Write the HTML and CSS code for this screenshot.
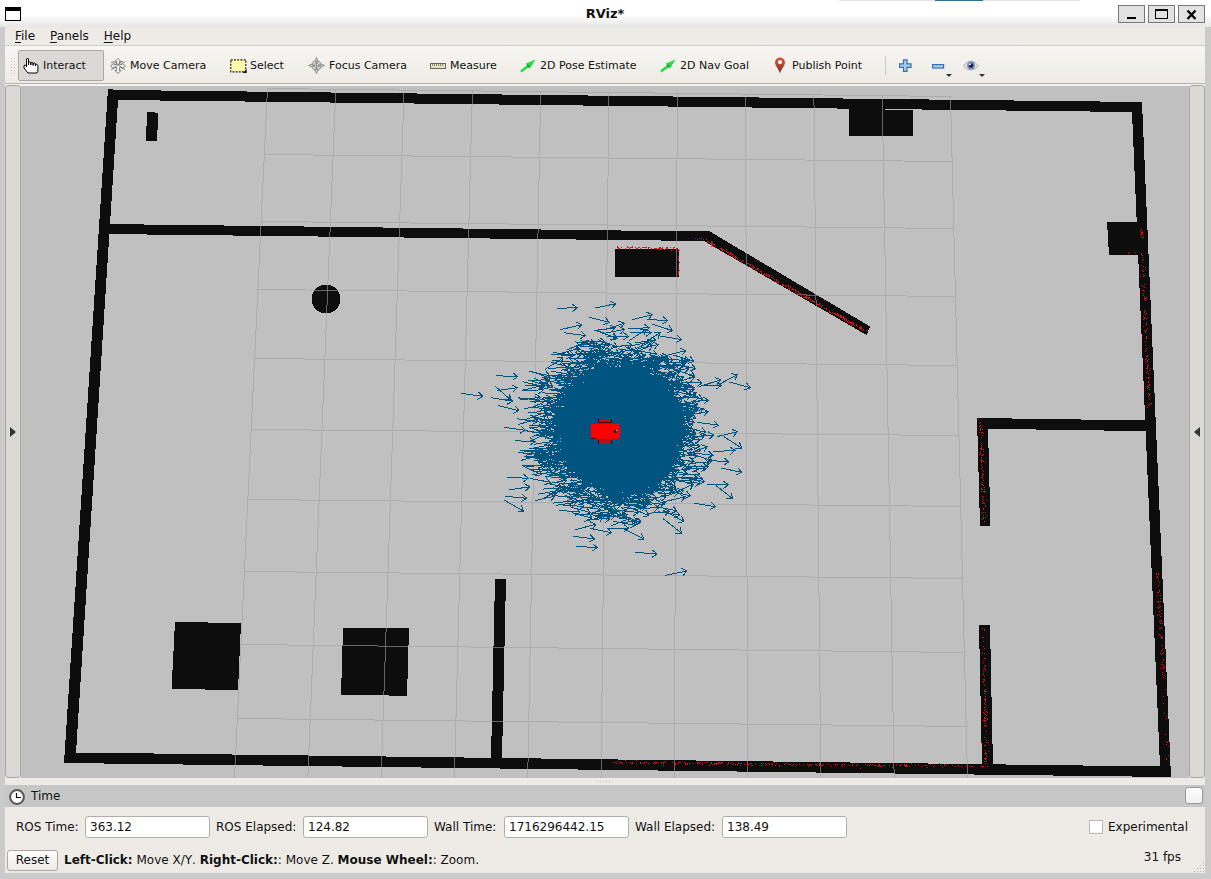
FILE: index.html
```html
<!DOCTYPE html>
<html lang="en">
<head>
<meta charset="utf-8">
<title>RViz*</title>
<link rel="stylesheet" href="styles.css">
</head>
<body>
<div class="window">
  <header class="titlebar">
    <svg class="app-icon" width="16" height="14" shape-rendering="crispEdges"><rect x=".5" y=".5" width="15" height="13" fill="#fff" stroke="#000"/><rect width="16" height="4"/></svg>
    <h1 class="title">RViz*</h1>
    <div class="win-buttons">
      <span class="win-btn"><svg width="26" height="17"><path d="M8 11h9v2H8z"/></svg></span>
      <span class="win-btn"><svg width="26" height="17" shape-rendering="crispEdges"><path d="M6 3h13v10H6zM7 5v7h11V5z" fill-rule="evenodd"/></svg></span>
      <span class="win-btn"><svg width="26" height="17"><path d="M8.500 4.500l8 8.500M16.500 4.500l-8 8.500" stroke="#000" stroke-width="2.300"/></svg></span>
    </div>
  </header>
  <div class="content">
    <nav class="menubar"><span><u>F</u>ile</span><span><u>P</u>anels</span><span><u>H</u>elp</span></nav>
    <div class="toolbar">
      <i class="grip"></i>
      <div class="tool interact active"><svg width="16" height="17" viewBox="0 0 16 17"><path d="M3.500 10V2q1-2 2 0v6V5.500q1-1 2.300 0V8 6q1-1 2.300 0v2.500V6.500q1-1 2.300 0V9 7.500q1.500-.8 2.500.8v6l-1 1.700H5L1 11V8.500q1.200-1 2.500.5z" fill="#fff" stroke="#000"/></svg>Interact</div>
      <div class="tool move"><svg width="16" height="16" viewBox="0 0 16 16" fill="#eee" stroke="#777" stroke-width=".9"><path d="M8 .5l3 3H9.500V6.500H12V5l3.500 3-3.500 3V9.500H9.500v3H11l-3 3-3-3h1.500v-3H4V11L.5 8 4 5v1.500h2.500v-3H5z"/><path d="M1 4.500l3-1 9 7 2 1M15 4.500l-3-1-9 7-2 1" fill="none"/></svg>Move Camera</div>
      <div class="tool select"><svg width="17" height="14"><rect x=".8" y=".8" width="15" height="12" fill="#fff9a9" stroke="#222" stroke-width="1.200" stroke-dasharray="2 1.200"/><path d="M16.500 10v4H13z"/></svg>Select</div>
      <div class="tool focus"><svg width="17" height="17" viewBox="0 0 17 17" fill="#e4e2de" stroke="#8a8a8a"><circle cx="8.500" cy="8.500" r="4.800"/><path d="M8.500.5l1.700 4.500H6.800zM8.500 16.500L6.800 12h3.400zM.5 8.500L5 6.800v3.400zM16.500 8.500L12 10.200V6.800z"/><path d="M8.500 4v9M4 8.500h9" stroke-width=".8"/><circle cx="8.500" cy="8.500" r="2.300" fill="none" stroke-width=".8"/></svg>Focus Camera</div>
      <div class="tool measure"><svg width="16" height="6"><rect x=".5" y=".5" width="15" height="5" fill="#eee2b7" stroke="#666"/><path d="M2.500 1v2M4.500 1v2M6.500 1v2M8.500 1v2M10.500 1v2M12.500 1v2" stroke="#888"/></svg>Measure</div>
      <div class="tool pose"><svg width="17" height="14"><path d="M1 12.500L8 7" stroke="#20da45" stroke-width="2.400"/><path d="M15.500 .5L5.500 4.700l2 1.300.5 3 2.200.3z" fill="#22dd48"/><path d="M6.500 5l3 2-1.500 1z" fill="#14752a"/></svg>2D Pose Estimate</div>
      <div class="tool nav"><svg width="17" height="14"><path d="M1 12.500L8 7" stroke="#20da45" stroke-width="2.400"/><path d="M15.500 .5L5.500 4.700l2 1.300.5 3 2.200.3z" fill="#22dd48"/><path d="M6.500 5l3 2-1.500 1z" fill="#14752a"/></svg>2D Nav Goal</div>
      <div class="tool publish"><svg width="12" height="17"><defs><linearGradient id="pin" x2="0" y2="1"><stop stop-color="#d4593d"/><stop offset=".5" stop-color="#a9452e"/><stop offset="1" stop-color="#5b3524"/></linearGradient></defs><path d="M6 16.500C5 12 1 9 1 5.500a5 5 0 0 1 10 0C11 9 7 12 6 16.500z" fill="url(#pin)"/><circle cx="6" cy="5.200" r="2.100" fill="#fbe9e4"/></svg>Publish Point</div>
      <i class="sep"></i>
      <svg class="act plus" width="13" height="13"><path d="M4.500.8h3.500v4h4v3.500H8v4H4.500v-4h-4V4.800h4z" fill="#a7d0ee" stroke="#3a6ea8" stroke-width="1.200"/></svg>
      <svg class="act minus" width="20" height="13"><rect x=".6" y=".6" width="11" height="3.400" fill="#a7d0ee" stroke="#3a6ea8" stroke-width="1.200"/><path d="M14 10h6l-3 3z" fill="#333"/></svg>
      <svg class="act eye" width="22" height="18"><path d="M.5 7Q8-3 15.500 7 8 15 .5 7z" fill="#e8e8ed" stroke="#aaaab3"/><circle cx="8" cy="6.500" r="4" fill="#7b8cbd"/><circle cx="8" cy="6.500" r="2.200" fill="#151a50"/><circle cx="7" cy="5.300" r="1" fill="#fff"/><path d="M16 15h6l-3 3z" fill="#333"/></svg>
    </div>
    <main class="view">
      <div class="side"><svg width="6" height="10"><path d="M0 0l6 5-6 5z" fill="#333"/></svg></div>
      <svg class="scene" viewBox="21 86 1168 692" width="1168" height="692" shape-rendering="crispEdges">
        <g fill="#0d0d0d">
          <path d="M108 89L118 90 1142 102 1171 777 64 763zM118 100L76 752.500 1160 766.500 1132 112z" fill-rule="evenodd"/>
          <path d="M104 224L700 231.500 709 231 870 326.500 866.500 335 704 241 104 234z"/>
          <path d="M147 112l11 .7-.8 28.300H146z"/>
          <path d="M615 249h63.500v28H614.500zM849 100h36v9.500h28V136h-64z"/>
          <path d="M1107 222h35l3 33.500-36-.8z"/>
          <path d="M977 418L1150 420.500V431.200L988 428.800 990.500 525.500H980z"/>
          <path d="M979 625h11l3 142-11-1z"/>
          <path d="M495 579h11l-4 180-11-.5z"/>
          <path d="M175 622l66 1-3 67-66.500-1zM343 628h66l-2 67.700-66-.7z"/>
          <circle cx="326" cy="299" r="14.500"/>
        </g>
        <path id="grid" class="grid"/>
        <path id="scan" fill="#e0141c"/>
        <path d="M695 238h1v1h-1zM697 239h1v1h-1zM699 238h1v1h-1zM701 238h1v1h-1zM703 239h1v1h-1z" fill="#8b1ca6"/>
        <path id="particles" class="particles"/>
        <g>
          <path d="M598 419h14v5h-14zM598 439h14v5h-14z" fill="#b3131d"/>
          <path d="M598 419h1v4h-1zM611 419h1v4h-1zM599 422h12v1h-12zM598 440h1v4h-1zM611 440h1v4h-1z" fill="#3b0712"/>
          <path d="M591 424h28l2 7-2 8H591z" fill="#f00"/>
          <path d="M591 438h5v1h-5z" fill="#3b0712"/>
          <path d="M614 430h3v3h-3z" fill="#222"/><path d="M616 430h1v1h-1z" fill="#ff9"/>
        </g>
      </svg>
      <div class="side"><svg width="6" height="10"><path d="M6 0L0 5l6 5z" fill="#333"/></svg></div>
    </main>
    <div class="splitter"><i></i></div>
    <div class="time-head">
      <svg width="16" height="16"><circle cx="8" cy="8" r="6.900" fill="#fff" stroke="#555" stroke-width="2"/><path d="M7.500 4v4.500H12" fill="none" stroke="#111" stroke-width="1.200"/></svg>
      <span>Time</span><i class="close"></i>
    </div>
    <div class="fields">
      <label class="l1">ROS Time:</label><span class="input">363.12</span>
      <label class="l2">ROS Elapsed:</label><span class="input">124.82</span>
      <label class="l3">Wall Time:</label><span class="input">1716296442.15</span>
      <label class="l4">Wall Elapsed:</label><span class="input">138.49</span>
      <span class="experimental"><i></i>Experimental</span>
    </div>
    <footer class="status">
      <span class="reset">Reset</span>
      <p><b>Left-Click:</b> Move X/Y. <b>Right-Click:</b>: Move Z. <b>Mouse Wheel:</b>: Zoom.</p>
      <span class="fps">31 fps</span>
      <svg class="sizegrip" width="12" height="12" fill="#b5b3ae"><path d="M10 0h1v1h-1zM7 3h1v1H7zM10 3h1v1h-1zM4 6h1v1H4zM7 6h1v1H7zM10 6h1v1h-1zM1 9h1v1H1zM4 9h1v1H4zM7 9h1v1H7zM10 9h1v1h-1z"/></svg>
    </footer>
  </div>
</div>
<script src="scene.js"></script>
</body>
</html>
```
FILE: styles.css
```css
* { box-sizing: border-box; }
body { margin: 0; font: 12px "DejaVu Sans", sans-serif; color: #111; overflow: hidden; }
svg { display: block; flex: none; }
.window { width: 1211px; height: 879px; background: #cbcbcb; display: flex; flex-direction: column; }
.titlebar { height: 27px; flex: none; display: flex; align-items: center; padding: 0 6px 0 5px;
  background: linear-gradient(90deg, transparent 839px, #e4e4e4 839px 935px, #2e6e93 935px 983px, #e4e4e4 983px 1080px, transparent 1080px) 0 0 / 100% 1px no-repeat,
  linear-gradient(#fff 55%, #e6e6e6); }
.app-icon { margin-top: 1px; }
.title { flex: 1; margin: 0 0 0 71px; font-size: 13px; text-align: center; font-weight: bold; color: #111; }
.win-buttons { display: flex; gap: 3px; margin-top: 1px; }
.win-btn { width: 27px; height: 18px; background: #e2e2e2; border: 1px solid #777; }
.content { flex: none; width: 1200px; height: 846px; margin-left: 5px; background: #eeebe7; display: flex; flex-direction: column; }
.menubar { height: 19px; flex: none; border-bottom: 1px solid #cfccc8; display: flex; gap: 15px; padding: 2px 10px 0; line-height: 14px; }
.menubar u { text-underline-offset: 2px; }
.toolbar { height: 38px; flex: none; padding-top: 2px; background: linear-gradient(#f8f6f2, #eeebe6); border-bottom: 1px solid #b4b2ae; display: flex; align-items: center; font-size: 11px; color: #111; }
.grip { width: 5px; height: 17px; margin: 0 3px 0 5px; background: radial-gradient(circle, #c4c1bb 0.7px, transparent 0.8px) 0 0 / 3px 3px; }
.tool { display: flex; align-items: center; gap: 4px; height: 31px; padding-left: 5px; white-space: nowrap; flex: none; }
.active { background: #dbd9d5; border: 1px solid #aaa8a4; border-radius: 2px; padding-left: 4px; }
.interact { width: 86px; margin-right: 1px; }
.move { width: 120px; }
.select { width: 78px; gap: 3px; }
.focus { width: 122px; }
.measure { width: 90px; }
.pose { width: 140px; gap: 3px; }
.nav { width: 114px; gap: 3px; }
.publish { width: 115px; gap: 6px; }
.sep { width: 1px; height: 19px; background: #cecbc6; margin-left: 1px; }
.plus { margin-left: 13px; }
.minus { margin: 10px 0 0 20px; }
.eye { margin: 5px 0 0 11px; }
.view { height: 694px; flex: none; display: flex; padding-top: 2px; background: #f4f2ef; }
.side { width: 16px; height: 693px; margin-top: -1px; background: #dad9d5; border: 1px solid #aaa8a3; border-radius: 3px; display: flex; align-items: center; justify-content: center; }
.scene { background: #c0c0c0; }
.grid { fill: none; stroke: rgba(160, 160, 164, .6); }
.particles { fill: none; stroke: #005580; }
.splitter { height: 7px; flex: none; display: flex; justify-content: center; align-items: center; }
.splitter i { width: 17px; height: 2px; background: repeating-linear-gradient(90deg, #c4c1bb 0 1px, transparent 1px 3px); background-size: 100% 1px; background-repeat: no-repeat; }
.time-head { height: 22px; flex: none; background: #c7c7c7; display: flex; align-items: center; padding: 0 2px 0 4px; gap: 6px; }
.time-head svg { margin-top: 2px; }
.close { width: 18px; height: 17px; border: 1px solid #999; border-radius: 3px; background: linear-gradient(#fff, #f0f0f0); margin: -1px 0 0 auto; }
.fields { height: 39px; flex: none; display: flex; align-items: center; padding-left: 11px; }
.input { width: 125px; height: 22px; background: #fff; border: 1px solid #b0aeaa; border-radius: 3px; padding: 0 4px; line-height: 20px; }
.l1 { width: 69px; }
.l2, .l3, .l4 { padding-left: 6px; }
.l2 { width: 93px; }
.l3 { width: 76px; }
.l4 { width: 93px; }
.experimental { margin-left: auto; display: flex; align-items: center; gap: 5px; padding-right: 17px; }
.experimental i { width: 14px; height: 14px; border: 1px solid #bbb8b2; background: #fff; }
.status { height: 28px; flex: none; display: flex; align-items: center; padding: 0 0 1px 2px; position: relative; }
.reset { width: 51px; height: 21px; border: 1px solid #aaa8a3; border-radius: 3px; background: linear-gradient(#fff, #edebe8); text-align: center; line-height: 19px; margin-top: 1px; }
.status p { margin: 0 0 0 6px; white-space: nowrap; font-kerning: none; }
.fps { margin: -6px 24px 0 auto; }
.sizegrip { position: absolute; right: 0; bottom: 0; }
```
FILE: scene.js
```js
let seed = 7;
const rnd = () => (seed = (seed * 16807) % 2147483647) / 2147483647;
const gauss = () => Math.sqrt(-2 * Math.log(rnd())) * Math.cos(2 * Math.PI * rnd());

// Ground grid in perspective: ten columns, nine visible rows.
let g = '';
for (let i = 0; i <= 10; i++) g += `M${267.5 + 68.3 * i} ${88 + 0.8 * i}L${234.5 + 73.3 * i} 779`;
const rows = [[268, 88], [264, 154], [261, 221], [257, 289], [254, 358], [251, 429], [248, 499], [245, 571], [241, 644], [237, 718]];
const ends = [[951, 96], [952, 161], [953.5, 228], [955.5, 296], [957, 365], [959, 435], [961, 506], [963, 578], [966, 652], [968, 726]];
rows.forEach((r, i) => { g += `M${r[0]} ${r[1] + 0.5}L${ends[i][0]} ${ends[i][1] + 0.5}`; });
document.getElementById('grid').setAttribute('d', g);

// Laser returns: x1, y1, x2, y2, count, spread.
const hits = [
  [617, 247, 678, 248, 70, 0.7], [678, 249, 678, 275, 22, 0.4],
  [706, 240, 866, 331, 260, 0.9], [1141, 229, 1142, 239, 12, 0.6],
  [1120, 252, 1139, 252, 4, 0.4],
  [1142, 252, 1149, 408, 110, 1.1], [980, 419, 984, 523, 95, 1.1], [1157, 570, 1163, 680, 70, 1.1],
  [1163, 680, 1166, 765, 14, 1], [983, 628, 986, 766, 90, 1.1],
  [612, 762, 790, 764, 130, 0.8], [790, 764, 984, 766, 110, 0.7]
];
let s = '';
for (const [a, b, c, d, n, w] of hits)
  for (let i = 0; i < n; i++) {
    const t = rnd();
    const steep = Math.abs(d - b) > Math.abs(c - a);
    s += `M${Math.round(a + (c - a) * t + gauss() * w * (steep ? 1 : 0.1))} ${Math.round(b + (d - b) * t + gauss() * w * (steep ? 0.1 : 1))}h1v1h-1z`;
  }
document.getElementById('scan').setAttribute('d', s);

// Pose particles.
let p = '';
function arrow(x, y, a, len) {
  const tx = x + len * Math.cos(a), ty = y + len * Math.sin(a), h = 6.2;
  const hx = q => (tx - h * Math.cos(a + q)).toFixed(1) + ' ' + (ty - h * Math.sin(a + q)).toFixed(1);
  p += `M${x.toFixed(1)} ${y.toFixed(1)}L${tx.toFixed(1)} ${ty.toFixed(1)}M${hx(0.65)}L${tx.toFixed(1)} ${ty.toFixed(1)}L${hx(-0.65)}`;
}
for (let i = 0; i < 2500; i++) {
  const dx = gauss() * 36, dy = gauss() * 37;
  if (Math.hypot(dx / 92, dy / 99) > 1) continue;
  arrow(606 + dx, 428 + dy, gauss() * 0.24, 21);
}
// Dense centre of the cloud.
for (let i = 0; i < 2600; i++) {
  const r = 60 * Math.sqrt(rnd()), t = 2 * Math.PI * rnd();
  arrow(608 + r * Math.cos(t) * 0.95, 428 + r * Math.sin(t), gauss() * 0.24, 21);
}
// Outlying particles, in third-pixels from (440, 290).
[[350,55,412,53],[466,54,527,41],[447,82,508,97],[361,119,425,104],[371,128,437,137],[576,89,637,74],[620,88,683,92],[565,116,628,113],[636,102,698,122],[660,138,725,149],[605,165,660,128],[470,122,528,145],[675,197,737,182],[700,195,761,214],[710,222,767,236],[333,193,395,197],[168,257,233,260],[62,310,128,319],[165,288,212,330],[152,323,218,334],[175,347,237,362],[192,412,256,421],[170,302,231,293],[248,275,312,290],[250,300,315,285],[240,330,302,322],[268,244,330,258],[778,290,842,269],[782,286,844,286],[838,283,892,254],[868,276,931,293],[830,440,892,425],[852,440,905,474],[820,485,885,481],[805,511,866,516],[842,534,905,547],[802,585,865,584],[827,586,878,626],[763,640,827,650],[225,452,285,455],[235,487,297,484],[246,526,308,528],[200,562,265,565],[207,600,269,590],[195,619,260,625],[192,630,251,664],[285,632,345,618],[405,719,468,703],[450,715,515,728],[518,694,585,706],[508,716,566,714],[553,717,612,747],[399,739,464,747],[407,769,472,773],[584,787,651,792],[676,856,741,843],[668,685,725,730],[655,665,720,675],[670,660,732,695]]
  .forEach(([a, b, c, d]) => arrow(440 + a / 3, 290 + b / 3, Math.atan2(d - b, c - a), Math.hypot(c - a, d - b) / 3));
document.getElementById('particles').setAttribute('d', p);
```
